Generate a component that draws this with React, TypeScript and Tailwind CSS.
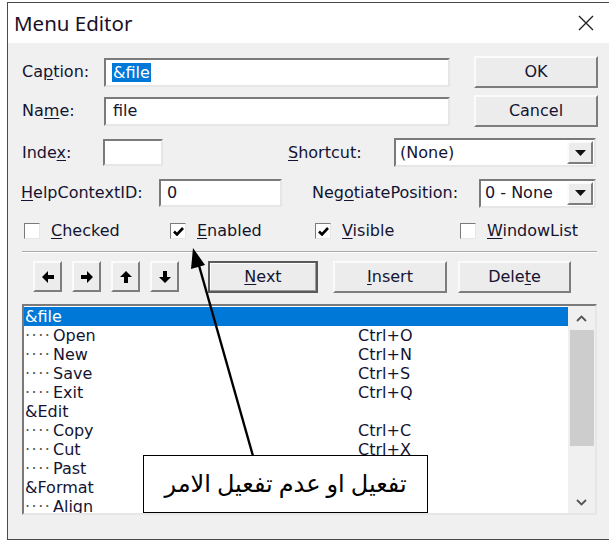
import type { ReactNode } from "react";

const ui = { fontFamily: '"DejaVu Sans", "Noto Sans", sans-serif' };

// sunken 3D edge used by text boxes, combos and the list
const sunken =
  "border-2 border-t-[#7a7a7a] border-l-[#7a7a7a] border-r-[#e6e6e6] border-b-[#e6e6e6] bg-white";
// raised 3D edge used by push buttons
const raised =
  "border-2 border-t-[#fbfbfb] border-l-[#fbfbfb] border-r-[#7d7d7d] border-b-[#7d7d7d] bg-[#ececec]";

function Mn({ children }: { children: ReactNode }) {
  return <span className="underline underline-offset-2 decoration-1">{children}</span>;
}

function Button({ w, children, isDefault }: { w: string; children: ReactNode; isDefault?: boolean }) {
  return (
    <div
      className={`${w} h-[32px] flex items-center justify-center text-[16px] text-[#141432] ${
        isDefault ? "border-2 border-[#5a5a5a] bg-[#ececec] shadow-[inset_-1px_-1px_0_#9a9a9a,inset_1px_1px_0_#fff]" : raised
      }`}
    >
      {children}
    </div>
  );
}

function Combo({ w, value }: { w: string; value: string }) {
  return (
    <div className={`${w} h-[29px] ${sunken} flex items-center justify-between`}>
      <span className="pl-[4px] text-[16px] text-[#141432]">{value}</span>
      <div className={`w-[26px] h-[23px] mr-[1px] ${raised} flex items-center justify-center`}>
        <svg width="11" height="6" viewBox="0 0 11 6">
          <path d="M0 0h11L5.5 6z" fill="#111" />
        </svg>
      </div>
    </div>
  );
}

function Check({ on, children }: { on?: boolean; children: ReactNode }) {
  return (
    <div className="flex items-center gap-[11px] text-[16px] text-[#141432]">
      <div className={`w-[16px] h-[16px] ${sunken} flex items-center justify-center border-[1.5px]`}>
        {on && (
          <svg width="11" height="9" viewBox="0 0 11 9">
            <path d="M1 4.5l3 3L10 1" fill="none" stroke="#000" strokeWidth="2.6" />
          </svg>
        )}
      </div>
      <span>{children}</span>
    </div>
  );
}

function ArrowBtn({ dir }: { dir: "l" | "r" | "u" | "d" }) {
  const rot = { l: 0, r: 180, u: 90, d: 270 }[dir];
  return (
    <div className={`w-[29px] h-[31px] ${raised} flex items-center justify-center`}>
      <svg width="14" height="14" viewBox="0 0 14 14" style={{ transform: `rotate(${rot}deg)` }}>
        <path d="M1 7l6-6v4h6v4H7v4z" fill="#000" />
      </svg>
    </div>
  );
}

const items: [string, string, boolean][] = [
  ["&file", "", false],
  ["Open", "Ctrl+O", true],
  ["New", "Ctrl+N", true],
  ["Save", "Ctrl+S", true],
  ["Exit", "Ctrl+Q", true],
  ["&Edit", "", false],
  ["Copy", "Ctrl+C", true],
  ["Cut", "Ctrl+X", true],
  ["Past", "", true],
  ["&Format", "", false],
  ["Align", "", true],
];

export default function App() {
  return (
    <div className="w-[609px] h-[542px] bg-white relative overflow-hidden pt-[2px] pl-[7px]" style={ui}>
      <div className="w-[620px] h-[538px] border-l border-t border-b border-[#4a4a4a] bg-[#f0f0f0] flex flex-col">
        {/* title bar */}
        <div className="h-[40px] bg-white flex items-center justify-between pl-[6px] pr-[33px] shrink-0">
          <span className="text-[20.5px] text-[#1c1028]" style={{ fontFamily: '"Noto Sans", sans-serif' }}>
            Menu Editor
          </span>
          <svg width="16" height="16" viewBox="0 0 16 16">
            <path d="M1 1l14 14M15 1L1 15" stroke="#222" strokeWidth="1.4" />
          </svg>
        </div>

        <div className="pl-[14px] flex flex-col text-[16px] text-[#141432]">
          {/* caption */}
          <div className="flex items-center mt-[13px] h-[32px]">
            <span className="w-[82px]">
              Ca<Mn>p</Mn>tion:
            </span>
            <div className={`w-[346px] h-[29px] ${sunken} flex items-center pl-[6px]`}>
              <span className="bg-[#0078d7] text-white leading-[19px] px-[1px]">&amp;file</span>
            </div>
            <div className="ml-[24px]">
              <Button w="w-[124px]">OK</Button>
            </div>
          </div>

          {/* name */}
          <div className="flex items-center mt-[7px] h-[32px]">
            <span className="w-[82px]">
              Na<Mn>m</Mn>e:
            </span>
            <div className={`w-[346px] h-[29px] ${sunken} flex items-center pl-[7px]`}>file</div>
            <div className="ml-[24px]">
              <Button w="w-[124px]">Cancel</Button>
            </div>
          </div>

          {/* index / shortcut */}
          <div className="flex items-center mt-[11px] h-[29px]">
            <span className="w-[81px]">
              Inde<Mn>x</Mn>:
            </span>
            <div className={`w-[60px] h-[27px] ${sunken}`} />
            <span className="ml-[125px] w-[106px]">
              <Mn>S</Mn>hortcut:
            </span>
            <Combo w="w-[202px]" value="(None)" />
          </div>

          {/* help context / negotiate */}
          <div className="flex items-center mt-[12px] h-[28px]">
            <span className="w-[138px] -ml-[1px]">
              <Mn>H</Mn>elpContextID:
            </span>
            <div className={`w-[123px] h-[28px] ${sunken} flex items-center pl-[6px]`}>0</div>
            <span className="ml-[30px] w-[167px]">
              Neg<Mn>o</Mn>tiatePosition:
            </span>
            <Combo w="w-[117px]" value="0 - None" />
          </div>

          {/* flags */}
          <div className="flex items-center mt-[14px] h-[20px] pl-[2px]">
            <div className="w-[146px]">
              <Check>
                <Mn>C</Mn>hecked
              </Check>
            </div>
            <div className="w-[145px]">
              <Check on>
                <Mn>E</Mn>nabled
              </Check>
            </div>
            <div className="w-[145px]">
              <Check on>
                <Mn>V</Mn>isible
              </Check>
            </div>
            <Check>
              <Mn>W</Mn>indowList
            </Check>
          </div>

          <div className="mt-[10px] w-[575px] border-t border-[#a8a8a8] border-b border-b-white" />

          {/* reorder + edit buttons */}
          <div className="flex items-center mt-[8px] h-[31px]">
            <div className="ml-[11px] flex gap-[10px]">
              <ArrowBtn dir="l" />
              <ArrowBtn dir="r" />
              <ArrowBtn dir="u" />
              <ArrowBtn dir="d" />
            </div>
            <div className="ml-[29px]">
              <Button w="w-[110px]" isDefault>
                <Mn>N</Mn>ext
              </Button>
            </div>
            <div className="ml-[15px]">
              <Button w="w-[114px]">
                <Mn>I</Mn>nsert
              </Button>
            </div>
            <div className="ml-[11px]">
              <Button w="w-[113px]">
                Dele<Mn>t</Mn>e
              </Button>
            </div>
          </div>

          {/* menu list */}
          <div className={`mt-[12px] w-[575px] h-[211px] ${sunken} flex overflow-hidden`}>
            <div className="flex-1 pt-[1px]">
              {items.map(([label, keys, child], i) => (
                <div
                  key={i}
                  className={`h-[19px] leading-[19px] flex ${i === 0 ? "bg-[#0078d7] text-white" : ""}`}
                >
                  <span className="w-[334px] pl-[1px] whitespace-nowrap">
                    {child && <span className="inline-block w-[28px] tracking-[1.5px] text-[#555]">····</span>}
                    {label}
                  </span>
                  <span>{keys}</span>
                </div>
              ))}
            </div>
            <div className="w-[27px] bg-[#f0f0f0] flex flex-col items-center">
              <div className="h-[24px] flex items-center justify-center">
                <svg width="11" height="7" viewBox="0 0 11 7">
                  <path d="M1 6l4.5-4.5L10 6" fill="none" stroke="#555" strokeWidth="1.8" />
                </svg>
              </div>
              <div className="w-[24px] h-[116px] bg-[#cdcdcd]" />
              <div className="flex-1" />
              <div className="h-[22px] flex items-center justify-center">
                <svg width="11" height="7" viewBox="0 0 11 7">
                  <path d="M1 1l4.5 4.5L10 1" fill="none" stroke="#555" strokeWidth="1.8" />
                </svg>
              </div>
            </div>
          </div>
        </div>
      </div>

      {/* callout pointing at the Enabled flag */}
      <svg className="absolute left-0 top-0 pointer-events-none" width="609" height="542">
        <line x1="253" y1="456" x2="198" y2="262" stroke="#000" strokeWidth="2.4" />
        <path d="M193 248l12 17-14 4z" fill="#000" />
      </svg>
      <div
        className="absolute left-[143px] top-[455px] w-[285px] h-[58px] bg-white border-[1.5px] border-black flex items-center justify-center text-[24px] text-black"
        dir="rtl"
        style={{ fontFamily: '"Liberation Serif", "DejaVu Sans", serif' }}
      >
        تفعيل او عدم تفعيل الامر
      </div>
    </div>
  );
}
